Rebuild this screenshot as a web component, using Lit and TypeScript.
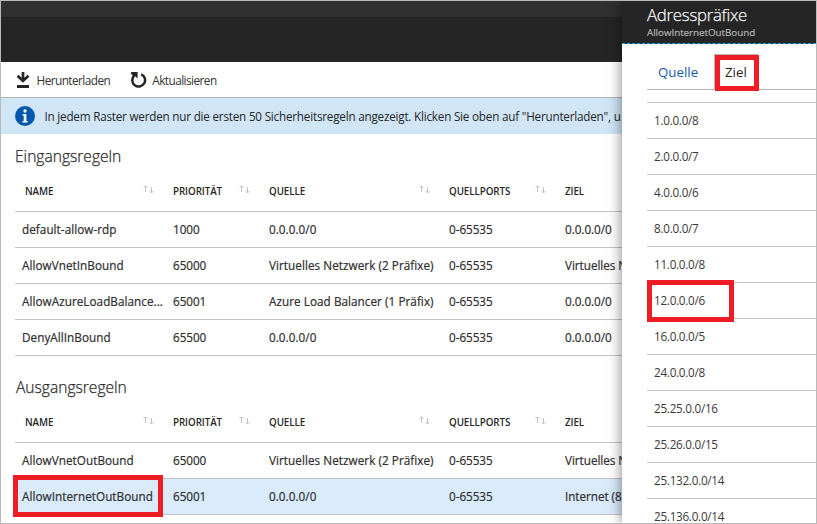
import { LitElement, html, css, svg } from "lit";
import { customElement, property } from "lit/decorators.js";
import { classMap } from "lit/directives/class-map.js";

interface Rule {
  name: string;
  priority: string;
  source: string;
  ports: string;
  target: string;
  selected?: boolean;
}

const INBOUND: Rule[] = [
  { name: "default-allow-rdp", priority: "1000", source: "0.0.0.0/0", ports: "0-65535", target: "0.0.0.0/0" },
  { name: "AllowVnetInBound", priority: "65000", source: "Virtuelles Netzwerk (2 Präfixe)", ports: "0-65535", target: "Virtuelles N" },
  { name: "AllowAzureLoadBalance...", priority: "65001", source: "Azure Load Balancer (1 Präfix)", ports: "0-65535", target: "0.0.0.0/0" },
  { name: "DenyAllInBound", priority: "65500", source: "0.0.0.0/0", ports: "0-65535", target: "0.0.0.0/0" },
];

const OUTBOUND: Rule[] = [
  { name: "AllowVnetOutBound", priority: "65000", source: "Virtuelles Netzwerk (2 Präfixe)", ports: "0-65535", target: "Virtuelles N" },
  { name: "AllowInternetOutBound", priority: "65001", source: "0.0.0.0/0", ports: "0-65535", target: "Internet (8", selected: true },
];

const PREFIXES = [
  "1.0.0.0/8", "2.0.0.0/7", "4.0.0.0/6", "8.0.0.0/7", "11.0.0.0/8", "12.0.0.0/6",
  "16.0.0.0/5", "24.0.0.0/8", "25.25.0.0/16", "25.26.0.0/15", "25.132.0.0/14", "25.136.0.0/14",
];

const COLUMNS = ["NAME", "PRIORITÄT", "QUELLE", "QUELLPORTS", "ZIEL"];

const sortIcon = html`<svg class="sort" width="12" height="9" viewBox="0 0 12 9">
  ${svg`<path d="M2.5 7V.8M.5 2.8L2.5.8L4.5 2.8M8.5 2V8M6.5 6L8.5 8L10.5 6" fill="none" stroke="#c3c3c3" stroke-width="1"/>`}
</svg>`;

@customElement("rule-grid")
export class RuleGrid extends LitElement {
  @property() heading = "";
  @property({ attribute: false }) rules: Rule[] = [];

  static styles = css`
    :host { display: block; }
    h2 {
      margin: 0 0 0 var(--heading-inset, 14px);
      height: 20px;
      font: 300 15.6px/20px "Open Sans", "Noto Sans", sans-serif;
      letter-spacing: 0;
      color: #2b2b2b;
      -webkit-text-stroke: 0.25px #2b2b2b;
    }
    .row {
      display: grid;
      grid-template-columns: 151px 96px 180px 116px 1fr;
      margin-left: 14px;
      padding-left: 7px;
      height: 35px;
      align-items: center;
      border-bottom: 1px solid #c4c4c4;
      color: #2e2e2e;
      white-space: nowrap;
      font-size: 11.7px;
      letter-spacing: -0.03px;
      -webkit-text-stroke: 0.2px #2e2e2e;
    }
    .row > span { padding-bottom: 1px; }
    .row .text { letter-spacing: 0.06px; }
    .row.selected { background: #d9ebfc; }
    .head {
      height: 45px;
      font-size: 9.8px;
      font-weight: 600;
      letter-spacing: -0.08px;
      color: #262626;
      -webkit-text-stroke: 0;
    }
    .head .cell {
      display: flex;
      justify-content: space-between;
      align-items: center;
      padding: 5px 18px 0 0;
    }
    .head .cell:first-child { padding-left: 3px; }
    .sort { margin-top: -3px; }
  `;

  render() {
    return html`
      <h2>${this.heading}</h2>
      <div class="row head">
        ${COLUMNS.map((c) => html`<div class="cell"><span>${c}</span>${c === "ZIEL" ? "" : sortIcon}</div>`)}
      </div>
      ${this.rules.map(
        (r) => html`<div class=${classMap({ row: true, selected: !!r.selected })}>
          <span class="text">${r.name}</span><span>${r.priority}</span><span class="text">${r.source}</span><span>${r.ports}</span><span>${r.target}</span>
        </div>`
      )}
    `;
  }
}

@customElement("prefix-panel")
export class PrefixPanel extends LitElement {
  static styles = css`
    :host { display: block; background: #fff; }
    header {
      box-sizing: border-box;
      height: 43px;
      padding: 3px 0 0 25px;
      background: #252525;
      border-bottom: 1px dashed #1ba5d8;
      white-space: nowrap;
    }
    .title {
      height: 21px;
      font-size: 16.8px;
      line-height: 21px;
      color: #f5f5f5;
      letter-spacing: -0.25px;
      font-weight: 300;
      -webkit-text-stroke: 0.25px #f5f5f5;
    }
    .subtitle { height: 14px; font-size: 9.8px; line-height: 15px; letter-spacing: -0.03px; color: #b4b4b4; -webkit-text-stroke: 0.2px #b4b4b4; }
    .tabs {
      display: flex;
      margin: 10px 0 0 25px;
      height: 35px;
      border-bottom: 1px solid #b4b4b4;
      font-size: 13.3px;
      line-height: 36px;
      letter-spacing: 0;
    }
    .tab { box-sizing: border-box; height: 36px; padding-left: 11px; width: 67px; color: #1259b0; }
    .tab.active { width: 44px; padding-left: 10px; color: #252525; border: 1px solid #b4b4b4; border-bottom: 0; background: #fff; line-height: 34px; }
    .list { margin: 12px 0 0 25px; border-top: 1px solid #c4c4c4; }
    .item {
      height: 35px;
      line-height: 35px;
      padding-left: 7px;
      border-bottom: 1px solid #c4c4c4;
      font-size: 11.7px;
      letter-spacing: -0.27px;
      color: #3a3a3a;
    }
  `;

  render() {
    return html`
      <header>
        <div class="title">Adresspräfixe</div>
        <div class="subtitle">AllowInternetOutBound</div>
      </header>
      <nav class="tabs">
        <div class="tab">Quelle</div>
        <div class="tab active">Ziel</div>
      </nav>
      <div class="list">${PREFIXES.map((p) => html`<div class="item">${p}</div>`)}</div>
    `;
  }
}

@customElement("app-root")
export class AppRoot extends LitElement {
  static styles = css`
    :host {
      display: flex;
      position: relative;
      box-sizing: border-box;
      width: 817px;
      height: 524px;
      overflow: hidden;
      border: 1px solid #b9bab9;
      background: #fff;
      font-family: "Open Sans", "Noto Sans", sans-serif;
    }
    main { width: 621px; overflow: hidden; flex: none; }
    .strip { height: 16px; background: #303030; }
    .banner { height: 45px; background: #252525; }
    .toolbar {
      display: flex;
      align-items: center;
      height: 35px;
      border-bottom: 1px solid #b4b4b4;
      font-size: 11.8px;
      letter-spacing: -0.55px;
      color: #333;
    }
    .toolbar svg, .info svg { flex: none; }
    .toolbar span { padding-top: 1px; }
    .download { margin: 0 6.5px 0 15px; }
    .refresh { margin: 0 5px 0 20px; }
    .info {
      display: flex;
      align-items: center;
      height: 36px;
      padding-left: 14px;
      gap: 9.5px;
      background: #d0e5f6;
      font-size: 11.7px;
      letter-spacing: -0.21px;
      color: #252525;
      white-space: nowrap;
    }
    rule-grid.in { margin-top: 12px; }
    rule-grid.out { margin-top: 21px; --heading-inset: 15px; }
    prefix-panel { flex: 1; position: relative; box-shadow: 0 0 13px rgba(0, 0, 0, 0.5); }
    .mark { position: absolute; box-sizing: border-box; border: 5px solid #ee1c25; }
    .mark.tab { left: 714px; top: 54px; width: 44px; height: 36px; }
    .mark.prefix { left: 646px; top: 279px; width: 87px; height: 42px; }
    .mark.rule { left: 12px; top: 474px; width: 150px; height: 42px; }
  `;

  render() {
    return html`
      <main>
        <div class="strip"></div>
        <div class="banner"></div>
        <div class="toolbar">
          <svg class="download" width="14" height="18" viewBox="0 0 14 18">
            <path d="M7 1v9M1.5 4.8L7 10L12.5 4.8" fill="none" stroke="#252525" stroke-width="2.7" />
            <path d="M1 14h12v3H1z" fill="#252525" />
          </svg>
          <span>Herunterladen</span>
          <svg class="refresh" width="17" height="18" viewBox="0 0 17 18">
            <path d="M11.2 3.3A6.4 6.4 0 1 1 4.2 4.6" fill="none" stroke="#252525" stroke-width="2.5" />
            <path d="M1.2 1H7.6V7.4L5.3 5.2L3.6 5.6L1.2 3Z" fill="#252525" />
          </svg>
          <span>Aktualisieren</span>
        </div>
        <div class="info">
          <svg width="20" height="20" viewBox="0 0 20 20">
            <circle cx="10" cy="10" r="10" fill="#0058ad" />
            <circle cx="10" cy="5" r="1.7" fill="#fff" />
            <path d="M7.6 8h3.8v7h1.2v1.6H7.4V15h1.3V9.5H7.6z" fill="#fff" />
          </svg>
          <span>In jedem Raster werden nur die ersten 50 Sicherheitsregeln angezeigt. Klicken Sie oben auf "Herunterladen", u</span>
        </div>
        <rule-grid class="in" heading="Eingangsregeln" .rules=${INBOUND}></rule-grid>
        <rule-grid class="out" heading="Ausgangsregeln" .rules=${OUTBOUND}></rule-grid>
      </main>
      <prefix-panel></prefix-panel>
      <div class="mark tab"></div>
      <div class="mark prefix"></div>
      <div class="mark rule"></div>
    `;
  }
}
